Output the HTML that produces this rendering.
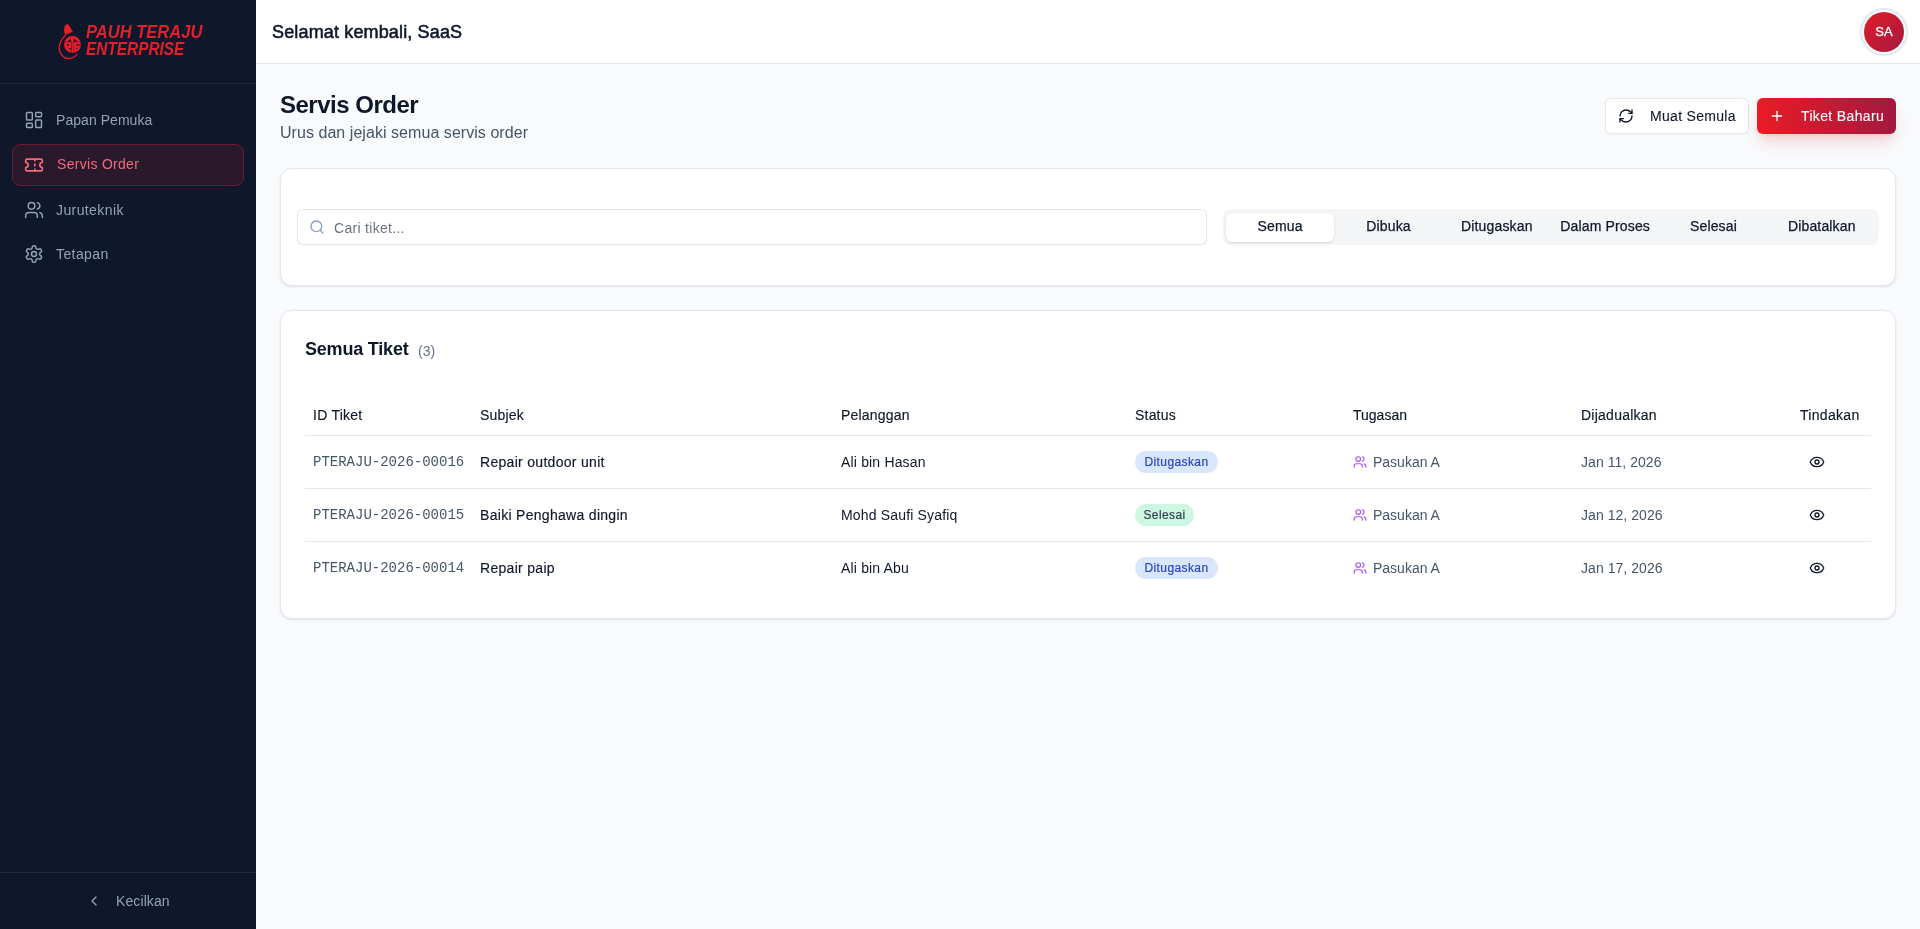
<!DOCTYPE html><html><head><meta charset="utf-8"><style>
*{box-sizing:border-box;margin:0;padding:0}
html,body{width:1920px;height:929px;overflow:hidden;will-change:transform;font-family:"Liberation Sans",sans-serif;background:#f8fafc;color:#0f172a}
.a{position:absolute;white-space:nowrap;line-height:16px}
#sb{position:absolute;left:0;top:0;width:256px;height:929px;background:#0f172a}
.nav{position:absolute;left:12px;width:232px;height:42px;border-radius:8px;color:#94a3b8;font-size:14px}
.nav.act{background:#2a182b;border:1px solid #6c1c30;color:#f26b7a}
.card{position:absolute;background:#fff;border:1px solid #e2e8f0;border-radius:12px;box-shadow:0 1px 3px rgba(15,23,42,.06),0 1px 2px rgba(15,23,42,.04)}
.btn{position:absolute;height:36px;border-radius:6px;font-size:14px}
.tab{position:absolute;top:4px;height:29px;width:108.33px;text-align:center;font-size:14px;line-height:27px;color:#0f172a;letter-spacing:.15px;-webkit-text-stroke:.25px #0f172a}
.th{position:absolute;top:407px;font-size:14px;color:#0f172a;-webkit-text-stroke:.15px #0f172a}
.td{font-size:14px}
.mono{font-family:"Liberation Mono",monospace;color:#475569;font-size:14px}
.badge{position:absolute;height:22px;border-radius:11px;font-size:12px;line-height:22px;font-weight:400;letter-spacing:.4px}
.b-blue{background:#d8e6fe;color:#2c46bd;-webkit-text-stroke:.2px #2c46bd}
.b-green{background:#cdf7e3;color:#374151;-webkit-text-stroke:.2px #374151}
</style></head><body>
<div id="sb">
<div class="a" style="left:0;top:83px;width:256px;height:1px;background:#232a38"></div>
<svg class="a" style="left:54px;top:20px" width="36" height="42" viewBox="0 0 36 42">
<g fill="#e41e2b">
<path d="M13.6 3.9 L15.2 5.2 L15.0 6.0 L16.6 7.2 L16.3 8.0 L17.5 9.3 L17.2 10.0 L19.2 11.5 L17.5 12.3 L14.5 13.7 L11.8 13.9 L10.3 13.2 L10.5 12.0 L9.8 11.0 L10.3 9.5 L9.9 8.5 L10.8 7.2 L10.6 6.2 L11.6 5.0 Z"/>
<circle cx="18.55" cy="24.5" r="8.5"/>
</g>
<path d="M12.2 14.2 C 9.5 17.5, 5.2 21.5, 5.2 27.5 C 5.2 34.5, 10.5 38.6, 14.5 38.6 C 18.5 38.6, 21 36.5, 23 34.4" fill="none" stroke="#e41e2b" stroke-width="1.3" stroke-linecap="round"/>
<g fill="#0f172a">
<path d="M13.2 21.8 L17.0 18.8 L17.0 21.8 Z"/>
<path d="M19.8 18.8 L19.8 21.8 L23.8 21.8 Z"/>
<rect x="13" y="24.4" width="1.9" height="1.4"/>
<path d="M14.2 28.2 L17 28.2 L17 29.7 Z"/>
<rect x="22" y="28" width="1.2" height="1.2"/>
</g>
<g fill="#6b1626">
<rect x="17.0" y="21.6" width="0.7" height="11.4"/>
<rect x="19.3" y="21.6" width="0.5" height="11.4"/>
<rect x="10.5" y="21.7" width="16.2" height="0.5"/>
<rect x="22.2" y="24.4" width="4.8" height="1.4"/>
</g>
</svg>
<div class="a" style="left:86px;top:22px;font:italic 700 19px/19px 'Liberation Sans',sans-serif;color:#e41e2b;transform-origin:0 0;transform:scaleX(.87)">PAUH TERAJU</div>
<div class="a" style="left:86px;top:39px;font:italic 700 19px/19px 'Liberation Sans',sans-serif;color:#e41e2b;transform-origin:0 0;transform:scaleX(.81)">ENTERPRISE</div>

<div class="nav" style="top:99px"><svg class="a" style="left:12px;top:11px" width="20" height="20" viewBox="0 0 24 24" fill="none" stroke="currentColor" stroke-width="1.75" stroke-linecap="round" stroke-linejoin="round"><rect x="3" y="3" width="7" height="9" rx="1"/><rect x="14" y="3" width="7" height="5" rx="1"/><rect x="14" y="12" width="7" height="9" rx="1"/><rect x="3" y="16" width="7" height="5" rx="1"/></svg><div class="a" style="left:44px;top:13px;line-height:17px;letter-spacing:.05px">Papan Pemuka</div></div>
<div class="nav act" style="top:144px"><svg class="a" style="left:11px;top:10px" width="20" height="20" viewBox="0 0 24 24" fill="none" stroke="currentColor" stroke-width="2" stroke-linecap="round" stroke-linejoin="round"><path d="M2 9a3 3 0 0 1 0 6v2a2 2 0 0 0 2 2h16a2 2 0 0 0 2-2v-2a3 3 0 0 1 0-6V7a2 2 0 0 0-2-2H4a2 2 0 0 0-2 2Z"/><path d="M13 5v2"/><path d="M13 17v2"/><path d="M13 11v2"/></svg><div class="a" style="left:44px;top:11px;line-height:17px;letter-spacing:.3px">Servis Order</div></div>
<div class="nav" style="top:189px"><svg class="a" style="left:12px;top:11px" width="20" height="20" viewBox="0 0 24 24" fill="none" stroke="currentColor" stroke-width="1.75" stroke-linecap="round" stroke-linejoin="round"><path d="M16 21v-2a4 4 0 0 0-4-4H6a4 4 0 0 0-4 4v2"/><circle cx="9" cy="7" r="4"/><path d="M22 21v-2a4 4 0 0 0-3-3.87"/><path d="M16 3.13a4 4 0 0 1 0 7.75"/></svg><div class="a" style="left:44px;top:13px;line-height:17px;letter-spacing:.4px">Juruteknik</div></div>
<div class="nav" style="top:233px"><svg class="a" style="left:12px;top:11px" width="20" height="20" viewBox="0 0 24 24" fill="none" stroke="currentColor" stroke-width="1.75" stroke-linecap="round" stroke-linejoin="round"><path d="M12.22 2h-.44a2 2 0 0 0-2 2v.18a2 2 0 0 1-1 1.73l-.43.25a2 2 0 0 1-2 0l-.15-.08a2 2 0 0 0-2.73.73l-.22.38a2 2 0 0 0 .73 2.73l.15.1a2 2 0 0 1 1 1.72v.51a2 2 0 0 1-1 1.74l-.15.09a2 2 0 0 0-.73 2.73l.22.38a2 2 0 0 0 2.73.73l.15-.08a2 2 0 0 1 2 0l.43.25a2 2 0 0 1 1 1.73V20a2 2 0 0 0 2 2h.44a2 2 0 0 0 2-2v-.18a2 2 0 0 1 1-1.73l.43-.25a2 2 0 0 1 2 0l.15.08a2 2 0 0 0 2.73-.73l.22-.39a2 2 0 0 0-.73-2.73l-.15-.08a2 2 0 0 1-1-1.74v-.5a2 2 0 0 1 1-1.74l.15-.09a2 2 0 0 0 .73-2.73l-.22-.38a2 2 0 0 0-2.73-.73l-.15.08a2 2 0 0 1-2 0l-.43-.25a2 2 0 0 1-1-1.73V4a2 2 0 0 0-2-2z"/><circle cx="12" cy="12" r="3"/></svg><div class="a" style="left:44px;top:13px;line-height:17px;letter-spacing:.4px">Tetapan</div></div>
<div class="a" style="left:0;top:872px;width:256px;height:1px;background:#232a38"></div>
<div style="color:#94a3b8;font-size:14px"><svg class="a" style="left:86px;top:893px" width="16" height="16" viewBox="0 0 24 24" fill="none" stroke="currentColor" stroke-width="2" stroke-linecap="round" stroke-linejoin="round"><path d="m15 18-6-6 6-6"/></svg><div class="a" style="left:116px;top:893px;line-height:17px;letter-spacing:.1px">Kecilkan</div></div>
</div>
<div class="a" style="left:256px;top:0;width:1664px;height:64px;background:#fff;border-bottom:1px solid #e2e8f0"></div>
<div class="a" style="left:272px;top:21px;font-size:18px;line-height:22px;font-weight:400;color:#0f172a;letter-spacing:.15px;-webkit-text-stroke:.55px #0f172a">Selamat kembali, SaaS</div>
<div class="a" style="left:1860px;top:8px;width:48px;height:48px;border-radius:50%;border:2px solid #e2e8f0;background:#fff"></div>
<div class="a" style="left:1864px;top:12px;width:40px;height:40px;border-radius:50%;background:linear-gradient(135deg,#e11d2a,#a3193f);color:#fff;font-size:13px;line-height:40px;text-align:center;-webkit-text-stroke:.3px #fff">SA</div>
<div class="a" style="left:280px;top:91px;font-size:24px;line-height:28px;font-weight:700;color:#0f172a;letter-spacing:-.5px">Servis Order</div>
<div class="a" style="left:280px;top:123px;font-size:16px;line-height:20px;color:#475569;letter-spacing:.05px">Urus dan jejaki semua servis order</div>
<div class="btn" style="left:1605px;top:98px;width:144px;background:#fff;border:1px solid #e5e7eb;box-shadow:0 1px 2px rgba(0,0,0,.04)"></div>
<svg class="a" style="left:1618px;top:108px" width="16" height="16" viewBox="0 0 24 24" fill="none" stroke="#0f172a" stroke-width="2" stroke-linecap="round" stroke-linejoin="round"><path d="M3 12a9 9 0 0 1 9-9 9.75 9.75 0 0 1 6.74 2.74L21 8"/><path d="M21 3v5h-5"/><path d="M21 12a9 9 0 0 1-9 9 9.75 9.75 0 0 1-6.74-2.74L3 16"/><path d="M8 16H3v5"/></svg>
<div class="a" style="left:1650px;top:108px;font-size:14px;color:#0f172a;letter-spacing:.3px;-webkit-text-stroke:.1px #0f172a">Muat Semula</div>
<div class="btn" style="left:1757px;top:98px;width:139px;background:linear-gradient(90deg,#e81c26,#a3193f);box-shadow:0 10px 15px -3px rgba(239,68,68,.22),0 4px 6px -4px rgba(239,68,68,.22)"></div>
<svg class="a" style="left:1769px;top:108px" width="16" height="16" viewBox="0 0 24 24" fill="none" stroke="#fff" stroke-width="2" stroke-linecap="round" stroke-linejoin="round"><path d="M5 12h14"/><path d="M12 5v14"/></svg>
<div class="a" style="left:1801px;top:108px;font-size:14px;color:#fff;letter-spacing:.35px;-webkit-text-stroke:.1px #fff">Tiket Baharu</div>
<div class="card" style="left:280px;top:168px;width:1616px;height:118px"></div>
<div class="a" style="left:297px;top:209px;width:910px;height:36px;border:1px solid #e2e8f0;border-radius:6px;background:#fff;box-shadow:0 1px 2px rgba(0,0,0,.04)"></div>
<svg class="a" style="left:309px;top:219px" width="16" height="16" viewBox="0 0 24 24" fill="none" stroke="#8b9bbd" stroke-width="1.9" stroke-linecap="round" stroke-linejoin="round"><circle cx="11" cy="11" r="8"/><path d="m21 21-4.3-4.3"/></svg>
<div class="a" style="left:334px;top:220px;font-size:14px;color:#6b7280;letter-spacing:.3px">Cari tiket...</div>
<div class="a" style="left:1223px;top:209px;width:656px;height:36px;border-radius:8px;background:#f4f5f6">
<div class="tab" style="left:3.00px;background:#fff;border-radius:6px;box-shadow:0 1px 3px rgba(0,0,0,.1),0 1px 2px -1px rgba(0,0,0,.1);">Semua</div>
<div class="tab" style="left:111.33px;">Dibuka</div>
<div class="tab" style="left:219.66px;">Ditugaskan</div>
<div class="tab" style="left:327.99px;">Dalam Proses</div>
<div class="tab" style="left:436.32px;">Selesai</div>
<div class="tab" style="left:544.65px;">Dibatalkan</div>
</div>
<div class="card" style="left:280px;top:310px;width:1616px;height:309px"></div>
<div class="a" style="left:305px;top:338px;font-size:18px;line-height:22px;font-weight:700;color:#0f172a;letter-spacing:-.2px">Semua Tiket</div>
<div class="a" style="left:418px;top:341px;font-size:14px;line-height:20px;color:#64748b">(3)</div>
<div class="a th" style="left:313px;letter-spacing:.25px">ID Tiket</div>
<div class="a th" style="left:480px;letter-spacing:.2px">Subjek</div>
<div class="a th" style="left:841px;letter-spacing:.2px">Pelanggan</div>
<div class="a th" style="left:1135px;letter-spacing:.2px">Status</div>
<div class="a th" style="left:1353px;letter-spacing:0">Tugasan</div>
<div class="a th" style="left:1581px;letter-spacing:.25px">Dijadualkan</div>
<div class="a th" style="left:1800px;letter-spacing:.3px">Tindakan</div>
<div class="a" style="left:305px;top:435px;width:1566px;height:1px;background:#e5e7eb"></div>
<div class="a mono" style="left:313px;top:454px;">PTERAJU-2026-00016</div>
<div class="a" style="left:480px;top:454px;font-size:14px;color:#0f172a;letter-spacing:.3px;-webkit-text-stroke:.15px #0f172a">Repair outdoor unit</div>
<div class="a" style="left:841px;top:454px;font-size:14px;color:#0f172a;letter-spacing:.17px">Ali bin Hasan</div>
<div class="badge b-blue a" style="left:1135px;top:451px;width:83px;text-align:center">Ditugaskan</div>
<svg class="a" style="left:1353px;top:455px" width="14" height="14" viewBox="0 0 24 24" fill="none" stroke="#a855f7" stroke-width="2" stroke-linecap="round" stroke-linejoin="round"><path d="M16 21v-2a4 4 0 0 0-4-4H6a4 4 0 0 0-4 4v2"/><circle cx="9" cy="7" r="4"/><path d="M22 21v-2a4 4 0 0 0-3-3.87"/><path d="M16 3.13a4 4 0 0 1 0 7.75"/></svg>
<div class="a" style="left:1373px;top:454px;font-size:14px;color:#475569;letter-spacing:0">Pasukan A</div>
<div class="a" style="left:1581px;top:454px;font-size:14px;color:#475569;letter-spacing:.05px">Jan 11, 2026</div>
<svg class="a" style="left:1809px;top:454px" width="16" height="16" viewBox="0 0 24 24" fill="none" stroke="#0f172a" stroke-width="2" stroke-linecap="round" stroke-linejoin="round"><path d="M2.062 12.348a1 1 0 0 1 0-.696 10.75 10.75 0 0 1 19.876 0 1 1 0 0 1 0 .696 10.75 10.75 0 0 1-19.876 0"/><circle cx="12" cy="12" r="3"/></svg>
<div class="a" style="left:305px;top:488px;width:1566px;height:1px;background:#e5e7eb"></div>
<div class="a mono" style="left:313px;top:507px;">PTERAJU-2026-00015</div>
<div class="a" style="left:480px;top:507px;font-size:14px;color:#0f172a;letter-spacing:.3px;-webkit-text-stroke:.15px #0f172a">Baiki Penghawa dingin</div>
<div class="a" style="left:841px;top:507px;font-size:14px;color:#0f172a;letter-spacing:.17px">Mohd Saufi Syafiq</div>
<div class="badge b-green a" style="left:1135px;top:504px;width:59px;text-align:center">Selesai</div>
<svg class="a" style="left:1353px;top:508px" width="14" height="14" viewBox="0 0 24 24" fill="none" stroke="#a855f7" stroke-width="2" stroke-linecap="round" stroke-linejoin="round"><path d="M16 21v-2a4 4 0 0 0-4-4H6a4 4 0 0 0-4 4v2"/><circle cx="9" cy="7" r="4"/><path d="M22 21v-2a4 4 0 0 0-3-3.87"/><path d="M16 3.13a4 4 0 0 1 0 7.75"/></svg>
<div class="a" style="left:1373px;top:507px;font-size:14px;color:#475569;letter-spacing:0">Pasukan A</div>
<div class="a" style="left:1581px;top:507px;font-size:14px;color:#475569;letter-spacing:.05px">Jan 12, 2026</div>
<svg class="a" style="left:1809px;top:507px" width="16" height="16" viewBox="0 0 24 24" fill="none" stroke="#0f172a" stroke-width="2" stroke-linecap="round" stroke-linejoin="round"><path d="M2.062 12.348a1 1 0 0 1 0-.696 10.75 10.75 0 0 1 19.876 0 1 1 0 0 1 0 .696 10.75 10.75 0 0 1-19.876 0"/><circle cx="12" cy="12" r="3"/></svg>
<div class="a" style="left:305px;top:541px;width:1566px;height:1px;background:#e5e7eb"></div>
<div class="a mono" style="left:313px;top:560px;">PTERAJU-2026-00014</div>
<div class="a" style="left:480px;top:560px;font-size:14px;color:#0f172a;letter-spacing:.3px;-webkit-text-stroke:.15px #0f172a">Repair paip</div>
<div class="a" style="left:841px;top:560px;font-size:14px;color:#0f172a;letter-spacing:.17px">Ali bin Abu</div>
<div class="badge b-blue a" style="left:1135px;top:557px;width:83px;text-align:center">Ditugaskan</div>
<svg class="a" style="left:1353px;top:561px" width="14" height="14" viewBox="0 0 24 24" fill="none" stroke="#a855f7" stroke-width="2" stroke-linecap="round" stroke-linejoin="round"><path d="M16 21v-2a4 4 0 0 0-4-4H6a4 4 0 0 0-4 4v2"/><circle cx="9" cy="7" r="4"/><path d="M22 21v-2a4 4 0 0 0-3-3.87"/><path d="M16 3.13a4 4 0 0 1 0 7.75"/></svg>
<div class="a" style="left:1373px;top:560px;font-size:14px;color:#475569;letter-spacing:0">Pasukan A</div>
<div class="a" style="left:1581px;top:560px;font-size:14px;color:#475569;letter-spacing:.05px">Jan 17, 2026</div>
<svg class="a" style="left:1809px;top:560px" width="16" height="16" viewBox="0 0 24 24" fill="none" stroke="#0f172a" stroke-width="2" stroke-linecap="round" stroke-linejoin="round"><path d="M2.062 12.348a1 1 0 0 1 0-.696 10.75 10.75 0 0 1 19.876 0 1 1 0 0 1 0 .696 10.75 10.75 0 0 1-19.876 0"/><circle cx="12" cy="12" r="3"/></svg>
</body></html>
